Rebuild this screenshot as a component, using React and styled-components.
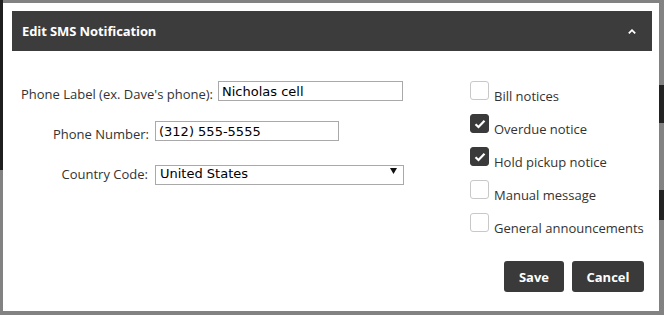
import React from "react";
import styled, { createGlobalStyle } from "styled-components";

const Global = createGlobalStyle`
  html, body { margin: 0; padding: 0; }
  body {
    width: 664px;
    height: 315px;
    overflow: hidden;
    background:
      linear-gradient(to bottom, #1f1f1f 0, #1f1f1f 170px, transparent 170px) left top / 3px 100% no-repeat,
      linear-gradient(to bottom, transparent 85px, #222 85px, #222 123px, transparent 123px, transparent 190px, #222 190px, #222 220px, transparent 220px) right top / 5px 100% no-repeat,
      #828282;
    font-family: "Open Sans", "Noto Sans", Arial, sans-serif;
  }
`;

const Page = styled.div`
  padding: 3px 5px 4px 3px;
  box-sizing: border-box;
  height: 315px;
`;

const Modal = styled.div`
  width: 656px;
  height: 308px;
  box-sizing: border-box;
  background: #fff;
  padding: 8px 7px 19px 9px;
  display: flex;
  flex-direction: column;
`;

const Header = styled.div`
  height: 40px;
  background: #3c3c3c;
  display: flex;
  align-items: center;
  justify-content: space-between;
  padding: 0 16px 0 10px;
  color: #fff;
`;

const Title = styled.div`
  font-family: "Open Sans", sans-serif;
  font-weight: 700;
  font-size: 13px;
  letter-spacing: -0.1px;
`;

const Body = styled.div`
  display: grid;
  grid-template-columns: 1fr 182px;
  padding-top: 30px;
`;

const Form = styled.div`
  display: flex;
  flex-direction: column;
  gap: 20px;
`;

const Row = styled.div`
  display: flex;
  align-items: center;
  height: 20px;
`;

const Label = styled.label`
  width: ${(p) => p.$w}px;
  margin-right: ${(p) => p.$gap}px;
  padding-top: 6px;
  text-align: right;
  font-size: 13px;
  color: #333;
  white-space: nowrap;
  flex-shrink: 0;
`;

const TextInput = styled.input`
  box-sizing: border-box;
  width: ${(p) => p.$w}px;
  height: 20px;
  border: 1px solid #a9a9a9;
  padding: 0 3px;
  margin: 0;
  font-family: "DejaVu Sans", Verdana, sans-serif;
  font-size: 13px;
  color: #000;
  outline: none;
`;

const SelectWrap = styled.div`
  position: relative;
  width: 249px;
  height: 20px;
`;

const Select = styled.select`
  appearance: none;
  -webkit-appearance: none;
  box-sizing: border-box;
  width: 100%;
  height: 20px;
  line-height: 16px;
  border: 1px solid #a9a9a9;
  border-radius: 0;
  background: #fff;
  padding: 0 0 3px 4px;
  margin: 0;
  font-family: "DejaVu Sans", Verdana, sans-serif;
  font-size: 13px;
  color: #000;
  outline: none;
`;

const Arrow = styled.svg`
  position: absolute;
  right: 7px;
  top: 7px;
  pointer-events: none;
`;

const Checks = styled.div`
  display: flex;
  flex-direction: column;
  gap: 8px;
`;

const CheckRow = styled.div`
  display: flex;
  align-items: flex-start;
  gap: 5px;
  height: 25px;
`;

const Box = styled.span`
  box-sizing: border-box;
  width: 19px;
  height: 19px;
  border-radius: 3px;
  flex-shrink: 0;
  display: flex;
  align-items: center;
  justify-content: center;
  background: ${(p) => (p.$checked ? "#3a3a3a" : "#fff")};
  border: ${(p) => (p.$checked ? "1px solid #3a3a3a" : "1px solid #c8c8c8")};
`;

const CheckLabel = styled.span`
  margin-top: 6px;
  line-height: 18px;
  font-size: 13px;
  color: #333;
  white-space: nowrap;
`;

const Footer = styled.div`
  margin-top: auto;
  display: flex;
  justify-content: flex-end;
  gap: 8px;
  padding-right: 8px;
`;

const Button = styled.button`
  height: 31px;
  width: ${(p) => p.$w}px;
  border: none;
  border-radius: 3px;
  background: #3a3a3a;
  color: #fff;
  font-family: "Open Sans", sans-serif;
  font-weight: 700;
  font-size: 13px;
  padding: 0;
  cursor: pointer;
`;

const items = [
  { label: "Bill notices", checked: false },
  { label: "Overdue notice", checked: true },
  { label: "Hold pickup notice", checked: true },
  { label: "Manual message", checked: false },
  { label: "General announcements", checked: false },
];

export default function App() {
  return (
    <>
      <Global />
      <Page>
        <Modal>
          <Header>
            <Title>Edit SMS Notification</Title>
            <svg width="8" height="5" viewBox="0 0 8 5">
              <polyline points="0.8,4.3 4,1.2 7.2,4.3" fill="none" stroke="#fff" strokeWidth="1.8" />
            </svg>
          </Header>
          <Body>
            <Form>
              <Row>
                <Label $w={201} $gap={5}>Phone Label (ex. Dave's phone):</Label>
                <TextInput $w={185} defaultValue="Nicholas cell" />
              </Row>
              <Row>
                <Label $w={137} $gap={6}>Phone Number:</Label>
                <TextInput $w={184} defaultValue="(312) 555-5555" />
              </Row>
              <Row>
                <Label $w={136} $gap={7}>Country Code:</Label>
                <SelectWrap>
                  <Select defaultValue="us">
                    <option value="us">United States</option>
                  </Select>
                  <Arrow width="7" height="6" viewBox="0 0 7 6">
                    <polygon points="0,0 7,0 3.5,6" fill="#111" />
                  </Arrow>
                </SelectWrap>
              </Row>
            </Form>
            <Checks>
              {items.map((it) => (
                <CheckRow key={it.label}>
                  <Box $checked={it.checked}>
                    {it.checked && (
                      <svg width="12" height="10" viewBox="0 0 12 10">
                        <polyline points="1.5,5.2 4.5,8 10.5,1.8" fill="none" stroke="#fff" strokeWidth="2.2" />
                      </svg>
                    )}
                  </Box>
                  <CheckLabel>{it.label}</CheckLabel>
                </CheckRow>
              ))}
            </Checks>
          </Body>
          <Footer>
            <Button $w={60}>Save</Button>
            <Button $w={72}>Cancel</Button>
          </Footer>
        </Modal>
      </Page>
    </>
  );
}
